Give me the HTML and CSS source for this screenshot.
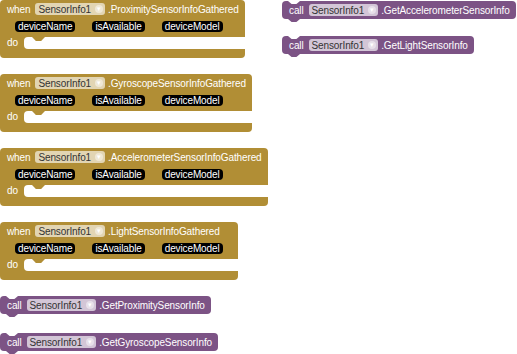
FILE: index.html
```html
<!DOCTYPE html>
<html lang="en">
<head>
  <meta charset="UTF-8">
  <meta name="viewport" content="width=device-width, initial-scale=1.0">
  <title>SensorInfo blocks</title>
  <link rel="stylesheet" href="styles.css">
</head>
<body>
  <div class="workspace">
    <div class="col">
      <div class="event">
        <div class="ev-head"><span>when</span><span class="dd">SensorInfo1<i class="arr">&#9662;</i></span><span>.ProximitySensorInfoGathered</span></div>
        <div class="ev-params"><span class="param">deviceName</span><span class="param">isAvailable</span><span class="param">deviceModel</span></div>
        <div class="ev-do"><span class="do">do</span><div class="slot"></div></div>
        <div class="ev-foot"></div>
      </div>

      <div class="event">
        <div class="ev-head"><span>when</span><span class="dd">SensorInfo1<i class="arr">&#9662;</i></span><span>.GyroscopeSensorInfoGathered</span></div>
        <div class="ev-params"><span class="param">deviceName</span><span class="param">isAvailable</span><span class="param">deviceModel</span></div>
        <div class="ev-do"><span class="do">do</span><div class="slot"></div></div>
        <div class="ev-foot"></div>
      </div>

      <div class="event">
        <div class="ev-head"><span>when</span><span class="dd">SensorInfo1<i class="arr">&#9662;</i></span><span>.AccelerometerSensorInfoGathered</span></div>
        <div class="ev-params"><span class="param">deviceName</span><span class="param">isAvailable</span><span class="param">deviceModel</span></div>
        <div class="ev-do"><span class="do">do</span><div class="slot"></div></div>
        <div class="ev-foot"></div>
      </div>

      <div class="event">
        <div class="ev-head"><span>when</span><span class="dd">SensorInfo1<i class="arr">&#9662;</i></span><span>.LightSensorInfoGathered</span></div>
        <div class="ev-params"><span class="param">deviceName</span><span class="param">isAvailable</span><span class="param">deviceModel</span></div>
        <div class="ev-do"><span class="do">do</span><div class="slot"></div></div>
        <div class="ev-foot"></div>
      </div>

      <div class="call"><span>call</span><span class="dd">SensorInfo1<i class="arr">&#9662;</i></span><span>.GetProximitySensorInfo</span></div>
      <div class="call"><span>call</span><span class="dd">SensorInfo1<i class="arr">&#9662;</i></span><span>.GetGyroscopeSensorInfo</span></div>
    </div>

    <div class="col col-right">
      <div class="call"><span>call</span><span class="dd">SensorInfo1<i class="arr">&#9662;</i></span><span>.GetAccelerometerSensorInfo</span></div>
      <div class="call"><span>call</span><span class="dd">SensorInfo1<i class="arr">&#9662;</i></span><span>.GetLightSensorInfo</span></div>
    </div>
  </div>
</body>
</html>
```

FILE: styles.css
```css
body {
  margin: 0;
  background: #fff;
  font-family: "Liberation Sans", Arial, sans-serif;
  font-size: 10px;
  letter-spacing: -0.12px;
  color: #fff;
}
.workspace {
  display: grid;
  grid-template-columns: 282px auto;
}
.col {
  display: flex;
  flex-direction: column;
  align-items: flex-start;
}
.col-right {
  padding-top: 1px;
}
.col-right .call {
  margin-bottom: 17px;
}

/* event blocks */
.event {
  background: #b18e35;
  border-radius: 4px;
  margin-bottom: 16px;
}
.ev-head {
  display: flex;
  align-items: center;
  height: 18px;
  padding: 0 6px 0 7px;
  white-space: nowrap;
}
.ev-params {
  display: flex;
  align-items: center;
  gap: 17px;
  height: 17px;
  padding: 0 15px;
}
.param {
  background: #000;
  border-radius: 4px;
  height: 11px;
  line-height: 11px;
  padding: 0 3px;
}
.ev-do {
  display: flex;
  padding-top: 2px;
}
.do {
  width: 24px;
  padding-left: 7px;
  box-sizing: border-box;
  line-height: 12px;
}
.slot {
  position: relative;
  flex: 1;
  height: 12px;
  background: #fff;
  border-radius: 4px 0 0 4px;
}
.slot::before {
  content: "";
  position: absolute;
  left: 8px;
  top: 0;
  width: 13px;
  height: 4px;
  background: #b18e35;
  clip-path: polygon(0 0, 100% 0, 70% 100%, 30% 100%);
}
.ev-foot {
  height: 9px;
}

/* dropdown field */
.dd {
  display: inline-flex;
  align-items: center;
  height: 12px;
  margin: 0 3px 0 5px;
  padding: 0 2px 0 3px;
  border-radius: 3px;
  background: #e2d5b3;
  color: #333;
}
.arr {
  display: inline-block;
  width: 8px;
  height: 8px;
  margin-left: 4px;
  border-radius: 50%;
  background: rgba(255, 255, 255, 0.45);
  color: #fff;
  font-style: normal;
  font-size: 7px;
  line-height: 8px;
  text-align: center;
  letter-spacing: 0;
}

/* method call blocks */
.call {
  position: relative;
  display: flex;
  align-items: center;
  height: 18px;
  padding: 0 6px 0 7px;
  background: #7c5385;
  border-radius: 4px;
  margin-bottom: 19px;
  white-space: nowrap;
}
.call .dd {
  background: #d3c6d7;
}
.call::before,
.call::after {
  content: "";
  position: absolute;
  left: 6px;
  width: 12px;
  height: 3px;
  clip-path: polygon(0 0, 100% 0, 70% 100%, 30% 100%);
}
.call::before {
  top: 0;
  background: #fff;
}
.call::after {
  bottom: -3px;
  background: #7c5385;
}
```
